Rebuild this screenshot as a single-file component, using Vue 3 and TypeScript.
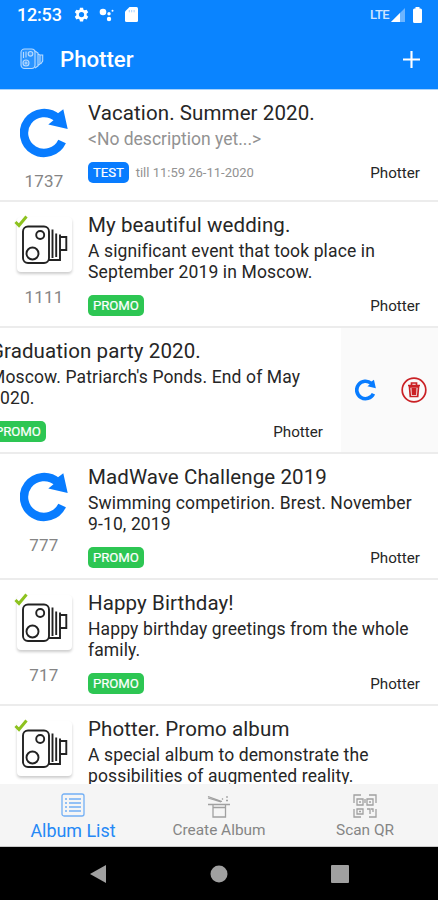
<script setup lang="ts">
interface Album {
  title: string
  lines: string[]
  count?: string
  badge: 'TEST' | 'PROMO'
  till?: string
  icon: 'reload' | 'camera'
  muted?: boolean
  swiped?: boolean
}

const albums: Album[] = [
  { title: 'Vacation. Summer 2020.', lines: ['<No description yet...>'], count: '1737', badge: 'TEST', till: 'till 11:59 26-11-2020', icon: 'reload', muted: true },
  { title: 'My beautiful wedding.', lines: ['A significant event that took place in', 'September 2019 in Moscow.'], count: '1111', badge: 'PROMO', icon: 'camera' },
  { title: 'Graduation party 2020.', lines: ["Moscow. Patriarch's Ponds. End of May", '2020.'], badge: 'PROMO', icon: 'camera', swiped: true },
  { title: 'MadWave Challenge 2019', lines: ['Swimming competirion. Brest. November', '9-10, 2019'], count: '777', badge: 'PROMO', icon: 'reload' },
  { title: 'Happy Birthday!', lines: ['Happy birthday greetings from the whole', 'family.'], count: '717', badge: 'PROMO', icon: 'camera' },
  { title: 'Photter. Promo album', lines: ['A special album to demonstrate the', 'possibilities of augmented reality.'], badge: 'PROMO', icon: 'camera' },
]
</script>

<template>
  <div class="screen">
    <header class="header">
      <div class="status">
        <span class="clock">12:53</span>
        <svg class="gear" viewBox="0 0 24 24"><path fill-rule="evenodd" d="M9.500 1h5l.6 3.200 2 1.100 3.100-1.100 2.500 4.300-2.500 2.200v2.600l2.500 2.200-2.500 4.300-3.100-1.100-2 1.100-.6 3.200h-5l-.6-3.200-2-1.100-3.100 1.100-2.500-4.300 2.500-2.200v-2.600L1.300 8.500l2.500-4.300 3.100 1.100 2-1.100zM12 7.800a4.200 4.200 0 1 0 0 8.400 4.200 4.200 0 0 0 0-8.400z" /></svg>
        <svg class="dots" viewBox="0 0 15 14"><circle cx="4" cy="4" r="3.300" /><circle cx="10" cy="5.800" r="1.700" /><circle cx="13.500" cy="2.800" r="1" /><circle cx="10" cy="11" r="2.200" /></svg>
        <svg class="card" viewBox="0 0 13 15"><path d="M4.500 0H11.500Q13 0 13 1.500V13.500Q13 15 11.500 15H1.500Q0 15 0 13.500V4.500z" /><path class="notch" d="M4.300 3v2.300M6.700 3v2.300M9.100 3v2.300" /></svg>
        <span class="lte">LTE</span>
        <svg class="signal" viewBox="0 0 14 14"><path opacity=".4" d="M14 0V14H0z" /><path d="M9 5V14H0z" /></svg>
        <svg class="battery" viewBox="0 0 9 16"><path d="M2.500 1.500V0h4v1.500H7.500Q9 1.500 9 3V14.500Q9 16 7.500 16h-6Q0 16 0 14.500V3Q0 1.500 1.500 1.500z" /></svg>
      </div>
      <div class="appbar">
        <svg class="logo" viewBox="0 0 24 22">
          <rect x="1" y="1" width="14" height="19.500" rx="3.500" /><circle cx="10.500" cy="5.800" r="2.300" /><circle cx="6" cy="15" r="3" />
          <path d="M3.500 4v6M6 3.500v6M4.500 15h3M6 13.500v3M15 3l3 2v13l-3 2M18 6l2 1v9l-2 1.500M20 7h2.700v6l-2 3" />
        </svg>
        <h1>Photter</h1>
        <svg class="plus" viewBox="0 0 16 16"><path d="M8 0V16M0 8H16" /></svg>
      </div>
    </header>

    <main class="list">
      <article v-for="album in albums" :key="album.title" class="row" :class="{ short: album.muted, swiped: album.swiped }">
        <div v-if="!album.swiped" class="side">
          <svg v-if="album.icon === 'reload'" class="reload" viewBox="0 0 48 50"><path class="arc" d="M42.100 33.500A20 20 0 1 1 37.500 10.200" /><path class="head" d="M37 6L43.300 1.300L47.700 21L28.300 16.500L35 11z" /></svg>
          <div v-else class="thumb">
            <svg class="camera" viewBox="0 0 46 40">
              <rect x="1" y="1.500" width="26" height="36.500" rx="5" /><circle cx="18.200" cy="10" r="4" /><circle cx="10.500" cy="28.500" r="6" />
              <path d="M30.500 4.500V33M34.200 8.500V32M27 35h11V9.500M38 12h6.300V25H38z" />
            </svg>
            <svg class="check" viewBox="0 0 14 13"><path d="M1.500 7L5 10.500L12.500 1.500" /></svg>
          </div>
          <span class="count">{{ album.count }}</span>
        </div>
        <div class="body">
          <h2>{{ album.title }}</h2>
          <p :class="{ muted: album.muted }"><span v-for="line in album.lines" :key="line">{{ line }}</span></p>
          <div class="meta">
            <span class="badge" :class="{ test: album.badge === 'TEST' }">{{ album.badge }}</span>
            <span v-if="album.till" class="till">{{ album.till }}</span>
            <span class="owner">Photter</span>
          </div>
        </div>
        <div v-if="album.swiped" class="actions">
          <svg class="mini" viewBox="0 0 48 50"><path class="arc" d="M42.100 33.500A20 20 0 1 1 37.500 10.200" /><path class="head" d="M37 6L43.300 1.300L47.700 21L28.300 16.500L35 11z" /></svg>
          <svg class="trash" viewBox="0 0 26 26"><circle cx="13" cy="13" r="11.800" /><path d="M7 8.500H19M10.500 8V6h5v2M8.500 10L9.300 19.500h7.400L17.500 10zM11.300 11l.3 7M13 11v7M14.700 11l-.3 7" /></svg>
        </div>
      </article>
    </main>

    <nav class="tabs">
      <div class="tab active">
        <svg viewBox="0 0 24 24"><rect x="1" y="1" width="22" height="22" rx="2" /><path d="M4 6h2M8 6h12M4 10h2M8 10h12M4 14h2M8 14h12M4 18h2M8 18h12" /></svg>
        <span>Album List</span>
      </div>
      <div class="tab">
        <svg viewBox="0 0 24 24"><path d="M1 2.500L15 7.500M1 4L14 8M1 10.500H23M6 11V23H18.500V11M6 13.500h12.500M15 4.500l1 1M19 6.500h2M20 2v2" /></svg>
        <span>Create Album</span>
      </div>
      <div class="tab">
        <svg viewBox="0 0 24 24"><path d="M1 9V1H8M16 1h7V9M1 15v8H8M16 23h7V15M4 5h6v6H4zM14 5h6v6h-6zM4 15h6v5H4zM14 15h3v5M18 15h2v3M12 5v4M6 8h2M16 8h2M6 17.500h2" /></svg>
        <span>Scan QR</span>
      </div>
    </nav>
    <footer class="sysnav">
      <svg viewBox="0 0 18 18"><path d="M17 0V18L1 9z" /></svg>
      <svg viewBox="0 0 18 18"><circle cx="9" cy="9" r="8.500" /></svg>
      <svg viewBox="0 0 18 18"><rect width="18" height="18" rx="1" /></svg>
    </footer>
  </div>
</template>

<style>
body { margin: 0; overflow: hidden; }
</style>

<style scoped>
* { box-sizing: border-box; }
svg { display: block; flex: none; }
h1, h2, p { margin: 0; font-weight: 400; }
.screen { width: 438px; height: 900px; display: flex; flex-direction: column; overflow: hidden; background: #fff; font-family: Roboto, sans-serif; color: #262626; white-space: nowrap; }
.header { height: 90px; flex: none; background: #0a84ff; color: #fff; border-bottom: 1px solid #a9d2fb; }
.status { display: flex; align-items: center; height: 29px; padding: 0 16px 0 17px; fill: #fff; }
.clock { width: 45px; font-size: 18px; font-weight: 500; letter-spacing: -.2px; }
.gear { width: 15px; height: 15px; margin-left: 12px; }
.dots { width: 15px; height: 14px; margin-left: 10px; }
.card { width: 13px; height: 15px; margin-left: 11px; }
.notch { stroke: #8fc5ff; stroke-width: .8; }
.lte { margin-left: auto; font-size: 13px; opacity: .8; letter-spacing: -.6px; font-weight: 500; }
.signal { width: 14px; height: 14px; margin-left: 2px; }
.battery { width: 9px; height: 16px; margin-left: 8px; }
.appbar { display: flex; align-items: center; height: 60px; padding: 0 18px 0 20px; }
.logo { width: 24px; height: 22px; fill: #ffffff30; stroke: #fff; stroke-width: 1.100; opacity: .7; }
h1 { margin-left: 16px; font-size: 22.200px; font-weight: 500; }
.plus { width: 17px; height: 17px; margin-left: auto; stroke: #fff; stroke-width: 2; }
.list { flex: 1; min-height: 0; overflow: hidden; }
.row { display: flex; height: 126px; border-bottom: 2px solid #ececec; }
.row.short { height: 112px; }
.side { width: 88px; flex: none; display: flex; flex-direction: column; align-items: center; padding-top: 18px; }
.reload { width: 48px; height: 50px; }
.arc { fill: none; stroke: #087cff; stroke-width: 8.400; }
.head { fill: #087cff; }
.count { margin-top: 11px; font-size: 17px; line-height: 24px; color: #858585; letter-spacing: .2px; }
.thumb { position: relative; width: 55px; height: 55px; margin-top: -3px; padding: 8px 0 0 5px; border-radius: 4px; background: #fff; box-shadow: 0 2px 3px #0003; }
.thumb + .count { margin-top: 13px; }
.camera { width: 46px; height: 40px; fill: none; stroke: #222; stroke-width: 1.900; }
.check { position: absolute; left: -3px; top: -2px; width: 14px; height: 13px; fill: none; stroke: #8dc21f; stroke-width: 3; }
.body { flex: 1; min-width: 0; padding: 11px 18px 0 0; }
h2 { font-size: 20.500px; line-height: 25px; letter-spacing: .1px; }
p { font-size: 17.500px; line-height: 21px; margin-top: 3px; letter-spacing: .13px; }
p span { display: block; }
.muted { color: #929292; letter-spacing: 0; }
.meta { display: flex; align-items: center; height: 21px; margin-top: 12px; }
.badge { height: 21px; padding: 0 5px; border-radius: 5px; background: #2dc653; color: #fff; font-size: 13.200px; line-height: 22px; letter-spacing: -.1px; -webkit-text-stroke: .2px #fff; }
.badge.test { background: #087cff; }
.till { margin-left: 7px; color: #929292; font-size: 13px; }
.owner { margin-left: auto; font-size: 15.200px; }
.swiped .body { flex: none; width: 438px; margin-left: -10px; padding-right: 105px; }
.actions { width: 98px; height: 124px; flex: none; display: flex; align-items: center; padding-left: 14px; margin-left: -87px; background: #fafafa; }
.mini { width: 21px; height: 22px; }
.trash { width: 26px; height: 26px; margin-left: 25px; fill: none; stroke: #ca2125; stroke-width: 1.700; }
.tabs { height: 63px; flex: none; display: grid; grid-template-columns: repeat(3, 1fr); background: #f5f5f5; border-bottom: 1px solid #c8c8c8; color: #858585; }
.tab { display: flex; flex-direction: column; align-items: center; padding-top: 10px; font-size: 15.400px; }
.tab svg { width: 24px; height: 24px; fill: none; stroke: #a0a0a0; stroke-width: 1.300; }
.tab span { line-height: 20px; margin-top: 2px; }
.active { padding-top: 9px; color: #2588f5; font-size: 17.900px; }
.tab.active span { margin-top: 4px; }
.active svg { stroke: #72aff5; }
.sysnav { height: 53px; flex: none; display: flex; align-items: center; justify-content: center; gap: 103px; background: #000; }
.sysnav svg { width: 18px; height: 18px; fill: #a0a0a0; }
</style>
